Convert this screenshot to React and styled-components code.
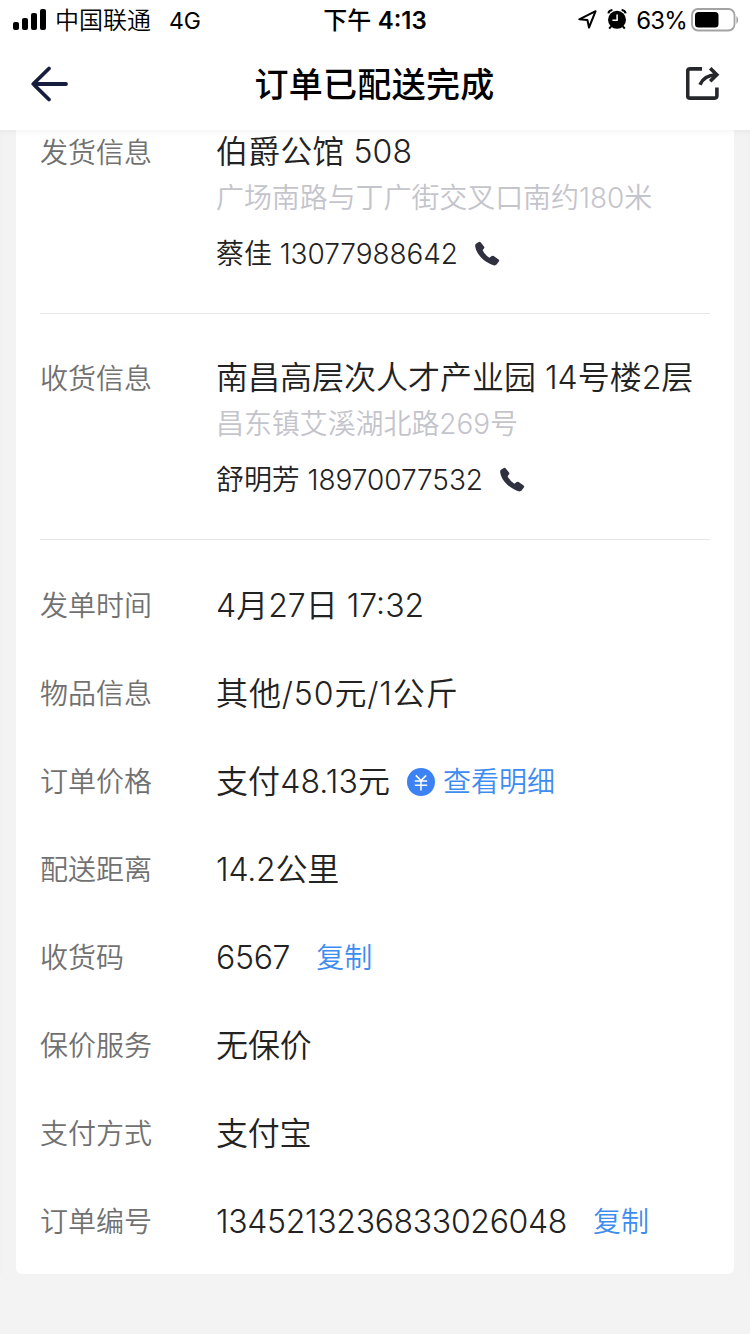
import React from 'react';
import styled, { createGlobalStyle } from 'styled-components';

const addresses = [
    {
        label: '发货信息',
        title: '伯爵公馆 508',
        detail: '广场南路与丁广街交叉口南约180米',
        contact: '蔡佳 13077988642',
        spacing: 0.1,
    },
    {
        label: '收货信息',
        title: '南昌高层次人才产业园 14号楼2层',
        detail: '昌东镇艾溪湖北路269号',
        contact: '舒明芳 18970077532',
        spacing: 0,
    },
];

const rows = [
    { label: '发单时间', value: '4月27日 17:32', spacing: 0 },
    { label: '物品信息', value: '其他/50元/1公斤', spacing: 0.9 },
    { label: '订单价格', value: '支付48.13元', spacing: 0.1, link: '查看明细', coin: true },
    { label: '配送距离', value: '14.2公里', spacing: -0.2 },
    { label: '收货码', value: '6567', spacing: -0.3, link: '复制' },
    { label: '保价服务', value: '无保价', spacing: -0.1 },
    { label: '支付方式', value: '支付宝', spacing: -0.2 },
    { label: '订单编号', value: '1345213236833026048', spacing: -0.34, link: '复制' },
];

const PhoneIcon = () => (
    <svg width='26' height='26' viewBox='0 0 26 26'>
        <path
            d='M2 2.8 L4.8 .9 Q5.8 .4 6.6 1.3 L10 5.4 Q10.8 6.5 9.9 7.5 L8.6 9.3 Q10.6 13.6 15.4 16.8 L17.7 15 Q18.7 14.3 19.7 15 L24.6 18.4 Q25.5 19.2 25 20.2 L22.8 23.3 Q22 24.4 20.4 24.4 C11.6 22.4 2.2 13.6 1.2 5.2 Q1 3.6 2 2.8Z'
            fill='#2f3040'
        />
    </svg>
);

const CoinIcon = () => (
    <svg width='28' height='28' viewBox='0 0 28 28'>
        <circle cx='14' cy='14' r='14' fill='#3c82f2' />
        <path d='M8.8 7.4 L14 12.6 L19.2 7.4 M14 12.6 V22.4 M7.8 13 H20.2 M7.8 17.2 H20.2' fill='none' stroke='#fff' strokeWidth='1.5' />
    </svg>
);

const App = () => {
    return (
        <Screen>
            <GlobalStyle />
            <StatusBar>
                <Side>
                    <svg width='34' height='22' viewBox='0 0 34 22'>
                        <rect x='0' y='13' width='6' height='8' rx='2' />
                        <rect x='9' y='9' width='6' height='12' rx='2' />
                        <rect x='18' y='4' width='6' height='17' rx='2' />
                        <rect x='27' y='0' width='6' height='21' rx='2' />
                    </svg>
                    <Carrier>中国联通</Carrier>
                    <Network>4G</Network>
                </Side>
                <Time>下午 <b>4:13</b></Time>
                <Side $end>
                    <svg width='20' height='22' viewBox='0 0 20 22'>
                        <path d='M1.3 10.3 L17.6 2.2 L11 18.5 L9.4 11 Z' fill='none' stroke='#000' strokeWidth='2' strokeLinejoin='round' />
                    </svg>
                    <Alarm width='20' height='22' viewBox='0 0 20 22'>
                        <circle cx='10' cy='10.8' r='9' />
                        <path d='M1.4 4.4 Q1.8 1.4 5.4 1.1 M18.6 4.4 Q18.2 1.4 14.6 1.1 M4 17.5 L2.2 19.6 M16 17.5 L17.8 19.6' fill='none' stroke='#000' strokeWidth='2' />
                        <path d='M10.1 5.4 V11.2 H5.4' fill='none' stroke='#fff' strokeWidth='1.5' />
                    </Alarm>
                    <Percent>63%</Percent>
                    <Battery width='50' height='24' viewBox='0 0 50 24'>
                        <rect x='1' y='1' width='42.5' height='21.5' rx='6' fill='none' stroke='#a3a3a3' strokeWidth='1.8' />
                        <rect x='4' y='4' width='23.5' height='15.5' rx='3.5' />
                        <path d='M45.4 8 Q47.2 9.5 47.2 12 Q47.2 14.5 45.4 16 Z' fill='#a3a3a3' />
                    </Battery>
                </Side>
            </StatusBar>
            <NavBar>
                <svg width='40' height='38' viewBox='0 0 40 38'>
                    <path d='M19 3.5 L3.2 19 L19 34.5 M3.5 19 H36' fill='none' stroke='#171d3d' strokeWidth='3.8' strokeLinecap='round' strokeLinejoin='round' />
                </svg>
                <Title>订单已配送完成</Title>
                <svg width='34' height='34' viewBox='0 0 34 34'>
                    <path d='M16 1.9 H4 Q1.7 1.9 1.7 4.2 V28.8 Q1.7 31.1 4 31.1 H28.6 Q30.9 31.1 30.9 28.8 V20.5' fill='none' stroke='#26272b' strokeWidth='3.6' />
                    <path d='M14 17.8 Q18 8.3 30 7.8 M24.2 1.3 L30.8 7.8 L24.2 14.3' fill='none' stroke='#26272b' strokeWidth='3.6' />
                </svg>
            </NavBar>
            <Body>
                <Card>
                    {addresses.map((item, i) => (
                        <Address key={item.label} $first={i === 0}>
                            <Label>{item.label}</Label>
                            <div>
                                <Value $spacing={item.spacing}>{item.title}</Value>
                                <Detail>{item.detail}</Detail>
                                <Contact>
                                    {item.contact}
                                    <PhoneIcon />
                                </Contact>
                            </div>
                        </Address>
                    ))}
                    <Rows>
                        {rows.map((item) => (
                            <Row key={item.label}>
                                <Label>{item.label}</Label>
                                <Value $spacing={item.spacing}>{item.value}</Value>
                                {item.link && (
                                    <Link $coin={item.coin}>
                                        {item.coin && <CoinIcon />}
                                        {item.link}
                                    </Link>
                                )}
                            </Row>
                        ))}
                    </Rows>
                </Card>
            </Body>
        </Screen>
    );
};

export default App;

const GlobalStyle = createGlobalStyle`
    body {
        margin: 0;
        background-color: #f3f3f3;
    }
`;

const Screen = styled.div`
    width: 750px;
    height: 1334px;
    overflow: hidden;
    background-color: #f3f3f3;
    color: #222;
    font-family: Inter, 'Noto Sans CJK SC', sans-serif;
    font-weight: 350;
    white-space: nowrap;
    svg {
        display: block;
        flex-shrink: 0;
    }
`;

const StatusBar = styled.div`
    display: grid;
    grid-template-columns: 1fr auto 1fr;
    align-items: center;
    height: 40px;
    padding: 0 9px 0 13px;
    background-color: #fff;
    color: #000;
    font-size: 24px;
    line-height: 38px;
`;

const Side = styled.div`
    display: flex;
    align-items: center;
    justify-content: ${(props) => (props.$end ? 'flex-end' : 'flex-start')};
`;

const Carrier = styled.span`
    margin-left: 8px;
    padding-top: 2px;
`;

const Network = styled.span`
    margin-left: 18px;
    padding-top: 2px;
    font-size: 23px;
    font-weight: 400;
`;

const Time = styled.div`
    margin-right: 4px;
    padding-top: 2px;
    font-weight: 500;
    b {
        font-weight: 600;
    }
`;

const Alarm = styled.svg`
    margin-left: 9px;
`;

const Percent = styled.span`
    margin: 0 4px 0 9px;
    padding-top: 2px;
    font-weight: 400;
    letter-spacing: -0.8px;
`;

const Battery = styled.svg`
    margin-bottom: 1px;
`;

const NavBar = styled.div`
    display: flex;
    justify-content: space-between;
    align-items: center;
    height: 90px;
    padding: 0 30px 2px 30px;
    box-sizing: border-box;
    background-color: #fff;
`;

const Title = styled.div`
    margin-right: 7px;
    padding-top: 2px;
    color: #000;
    font-size: 34px;
    font-weight: 500;
    line-height: 48px;
    letter-spacing: 0.3px;
`;

const Body = styled.div`
    padding: 0 16px;
    box-shadow: inset 0 4px 6px -3px #e6e6e6;
`;

const Card = styled.div`
    padding: 0 24px;
    border-radius: 0 0 6px 6px;
    background: linear-gradient(#f7f7f7, #fff 6px);
`;

const Address = styled.div`
    display: flex;
    padding: ${(props) => (props.$first ? '1px' : '43px')} 0 39px;
    border-bottom: 1px solid #e6e6e6;
`;

const Label = styled.div`
    flex: 0 0 176px;
    padding-top: 1px;
    color: #717171;
    font-size: 28px;
    line-height: 42px;
`;

const Value = styled.div`
    font-size: 32px;
    line-height: 42px;
    letter-spacing: ${(props) => props.$spacing}px;
`;

const Detail = styled.div`
    margin-top: 5px;
    color: #c4c4cb;
    font-size: 28px;
    line-height: 40px;
    letter-spacing: -0.08px;
`;

const Contact = styled.div`
    display: flex;
    align-items: center;
    gap: 16px;
    margin-top: 16px;
    font-size: 28px;
    line-height: 40px;
    letter-spacing: -0.07px;
`;

const Rows = styled.div`
    padding: 21px 0 9px;
`;

const Row = styled.div`
    display: flex;
    align-items: center;
    height: 88px;
    ${Value} {
        padding-top: 1px;
    }
`;

const Link = styled.div`
    display: flex;
    align-items: center;
    gap: 8px;
    margin-left: ${(props) => (props.$coin ? '17px' : '26px')};
    padding-top: 1px;
    color: #3f8cf0;
    font-size: 28px;
    line-height: 42px;
`;
